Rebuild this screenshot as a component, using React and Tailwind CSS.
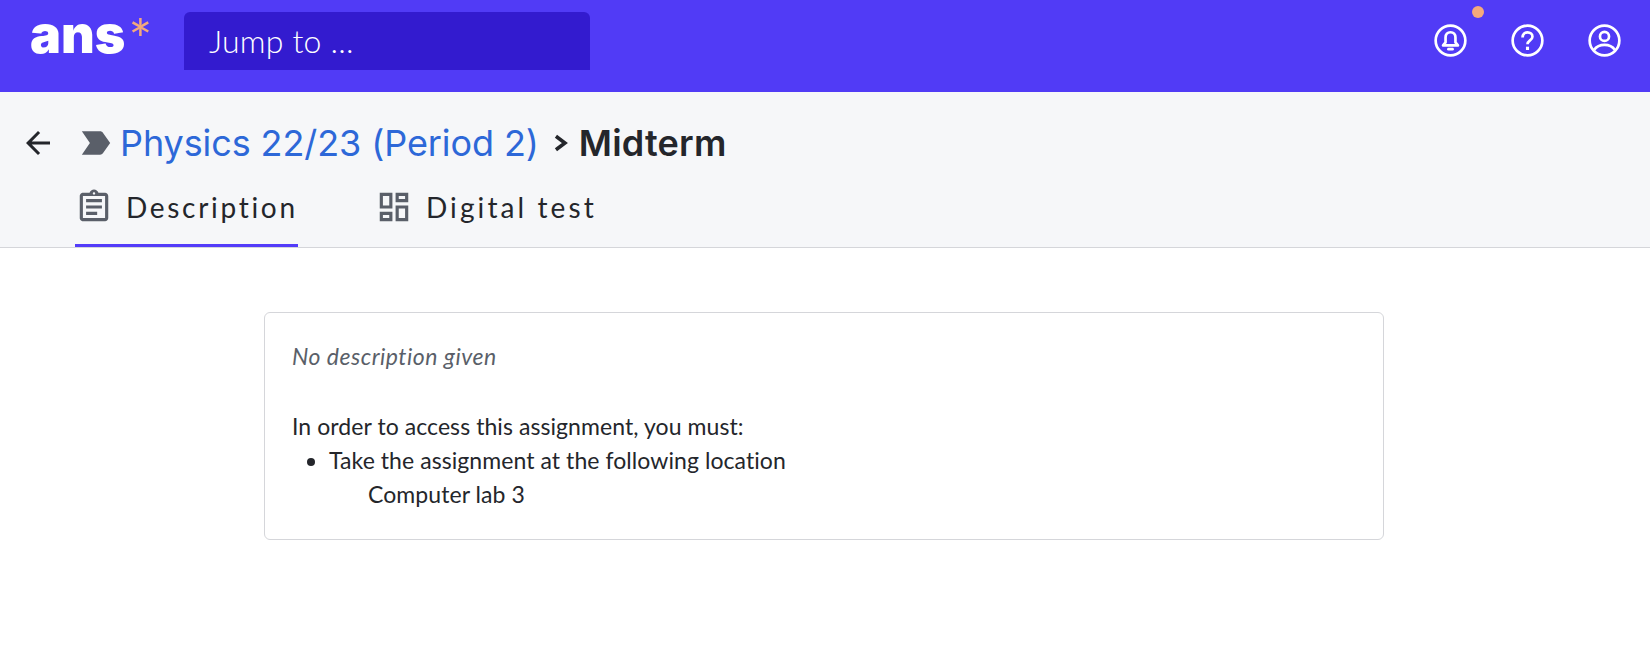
import { MdArrowBack, MdLabelImportant, MdOutlineAssignment, MdOutlineDashboard } from 'react-icons/md'

const SANS = "font-['Lato','Open_Sans',sans-serif]"

function BellIcon() {
  return (
    <svg viewBox="0 0 32 32" className="w-[33px] h-[33px]" fill="none" stroke="white" strokeWidth="2.6">
      <circle cx="16" cy="16" r="14.4" />
      <path d="M16 8c-3 0-4.800 2.200-4.800 5v4.800L8.800 20.800h14.400l-2.400-3V13c0-2.800-1.800-5-4.800-5Z" strokeLinejoin="round" />
      <path d="M14 24.400h4" strokeLinecap="round" />
    </svg>
  )
}

function HelpIcon() {
  return (
    <svg viewBox="0 0 32 32" className="w-[33px] h-[33px]" fill="none" stroke="white" strokeWidth="2.6">
      <circle cx="16" cy="16" r="14.4" />
      <path d="M11.200 13c0-3 2-4.800 4.800-4.800s4.800 1.700 4.800 4.100c0 3.600-4.800 3.600-4.800 7.300" />
      <path d="M16 22v3.200" strokeWidth="3" />
    </svg>
  )
}

function UserIcon() {
  return (
    <svg viewBox="0 0 32 32" className="w-[33px] h-[33px]" fill="none" stroke="white" strokeWidth="2.6">
      <circle cx="16" cy="16" r="14.4" />
      <circle cx="16" cy="12" r="4.400" />
      <path d="M6 25c2.200-3.200 6-4.800 10-4.800s7.800 1.600 10 4.800" />
    </svg>
  )
}

function Chevron() {
  return (
    <svg viewBox="0 0 14 16" className="w-[16px] h-[18px] ml-[14px] mr-[10px]" fill="none" stroke="#24262b" strokeWidth="3.2">
      <path d="M2.500 2l8 6-8 6" />
    </svg>
  )
}

export default function App() {
  return (
    <div className={`min-h-screen bg-white ${SANS}`}>
      {/* Top nav */}
      <nav className="h-[92px] bg-[#513bf6] flex items-start">
        <div className="w-[184px] shrink-0 pl-[30px] pt-[5px] flex items-start">
          <span className="text-white text-[52px] leading-[60px] font-black font-['Inter',sans-serif]">ans</span>
          <span className="text-[#f4a97c] text-[56px] leading-[56px] mt-[6px] ml-[3px]">*</span>
        </div>
        <div className="mt-[12px] w-[406px] h-[58px] bg-[#331bcf] rounded-t-md flex items-center pl-[25px] text-white text-[32px] font-light tracking-[0.2px]">
          Jump to ...
        </div>
        <div className="ml-auto mr-[29px] mt-[24px] flex gap-[44px]">
          <div className="relative">
            <BellIcon />
            <span className="absolute -top-[18px] right-[-17px] w-3 h-3 rounded-full bg-[#f4a97c]" />
          </div>
          <HelpIcon />
          <UserIcon />
        </div>
      </nav>

      {/* Header */}
      <header className="h-[156px] bg-[#f6f7f9] border-b border-[#d5d6da]">
        <div className="h-[100px] flex items-center pl-[20px] pt-[2px]">
          <MdArrowBack className="w-9 h-9 text-[#24262b]" />
          <MdLabelImportant className="w-10 h-10 text-[#5a5f69] ml-[20px]" />
          <a className="text-[#2d68d8] text-[36px] ml-[4px] font-['Inter',sans-serif] tracking-[-0.1px]">Physics 22/23 (Period 2)</a>
          <Chevron />
          <h1 className="text-[#24262b] text-[36px] font-semibold font-['Inter',sans-serif] tracking-[0.2px]">Midterm</h1>
        </div>
        <div className="flex pl-[75px]">
          <div className="w-[223px] h-[55px] flex items-center gap-[13px] border-b-[3px] border-[#533cf9] pb-[22px]">
            <MdOutlineAssignment className="w-[38px] h-[38px] text-[#5a5f69]" />
            <span className="text-[#24262b] text-[28px] tracking-[2.7px]">Description</span>
          </div>
          <div className="ml-[77px] h-[55px] flex items-center gap-[13px] pb-[25px]">
            <MdOutlineDashboard className="w-[38px] h-[38px] text-[#5a5f69]" />
            <span className="text-[#24262b] text-[28px] tracking-[3.1px]">Digital test</span>
          </div>
        </div>
      </header>

      {/* Card */}
      <main className="pt-[64px] pl-[264px]">
        <div className="w-[1120px] h-[228px] border border-[#d5d6da] rounded-md px-[27px] pt-[26px] text-[#24262b] text-[23px] leading-[34px] tracking-[0.07px]">
          <p className="italic text-[#5a5f69] tracking-[0.5px]">No description given</p>
          <p className="mt-[36px]">In order to access this assignment, you must:</p>
          <ul className="list-disc pl-[37px]">
            <li>Take the assignment at the following location</li>
          </ul>
          <p className="pl-[76px]">Computer lab 3</p>
        </div>
      </main>
    </div>
  )
}
